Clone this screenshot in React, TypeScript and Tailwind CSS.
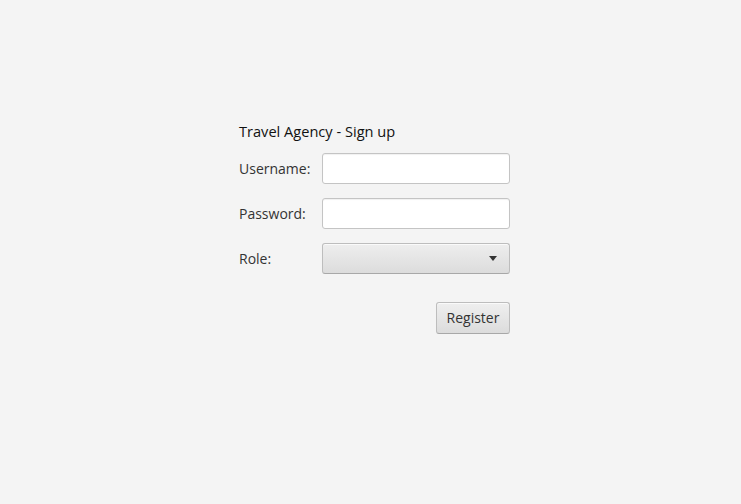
export default function App() {
  const field =
    "h-[31px] w-[188px] rounded-[3px] border border-[#c4c4c4] bg-white shadow-[inset_0_1px_1px_rgba(0,0,0,0.06)]";

  return (
    <div
      className="h-[504px] w-[741px] bg-[#f4f4f4] text-[14px] text-[#333]"
      style={{ fontFamily: '"Open Sans", "Noto Sans", sans-serif' }}
    >
      <div className="flex flex-col pl-[239px] pt-[121px]">
        {/* Title */}
        <div className="h-[20px] text-[14.6px] leading-[20px] text-[#111]">Travel Agency - Sign up</div>

        <div className="mt-[12px] flex flex-col gap-[14px]">
          <div className="flex items-center">
            <span className="w-[83px]">Username:</span>
            <input className={field} />
          </div>
          <div className="flex items-center">
            <span className="w-[83px]">Password:</span>
            <input type="password" className={field} />
          </div>
          <div className="flex items-center">
            <span className="w-[83px]">Role:</span>
            <div className="flex h-[31px] w-[188px] items-center justify-end rounded-[3px] border border-[#bdbdbd] border-b-[#a8a8a8] bg-gradient-to-b from-[#eeeeee] to-[#dcdcdc] pr-[12px] shadow-[inset_0_1px_0_rgba(255,255,255,0.7)]">
              <svg width="8" height="5" viewBox="0 0 8 5">
                <path d="M0 0 L8 0 L4 5 Z" fill="#333" />
              </svg>
            </div>
          </div>
        </div>

        <div className="mt-[28px] flex w-[271px] justify-end">
          <button className="flex h-[32px] w-[74px] items-center justify-center rounded-[3px] border border-[#bdbdbd] border-b-[#a8a8a8] bg-gradient-to-b from-[#efefef] to-[#dcdcdc] pb-[1px] text-[14px] text-[#333] shadow-[inset_0_1px_0_rgba(255,255,255,0.7)]">
            Register
          </button>
        </div>
      </div>
    </div>
  );
}
